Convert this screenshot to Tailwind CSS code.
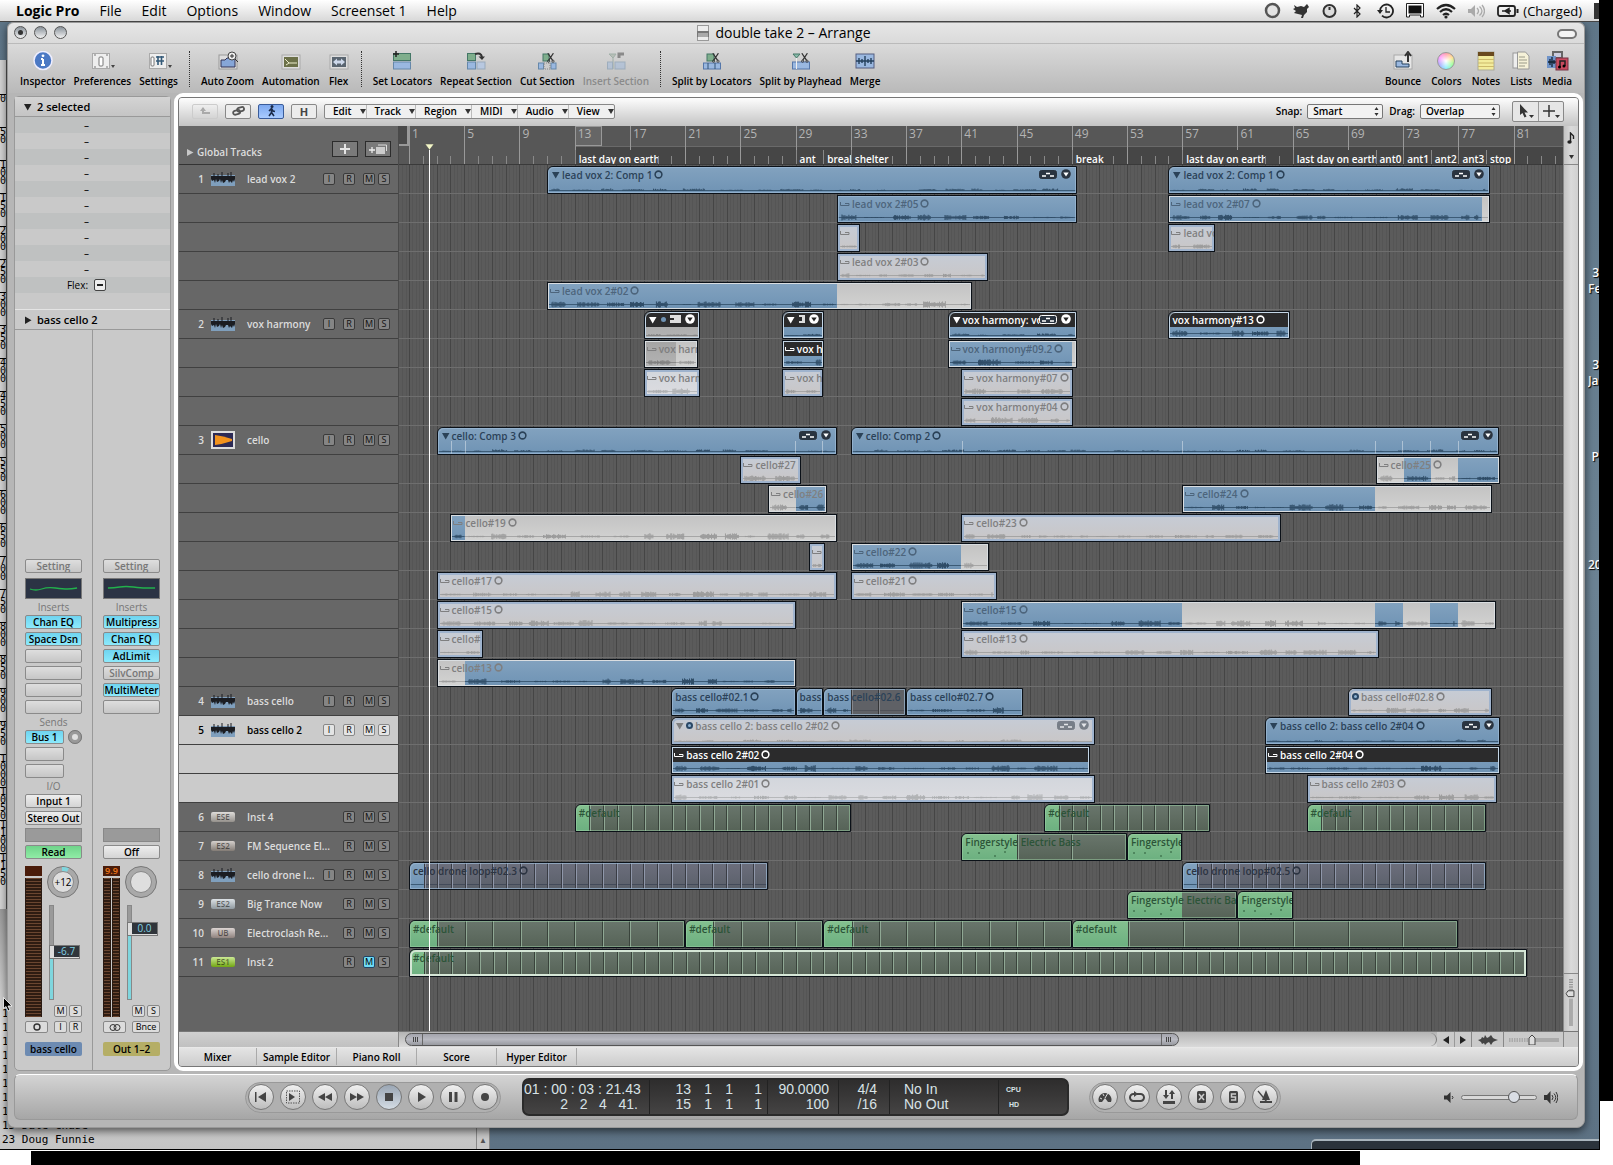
<!DOCTYPE html>
<html lang="en">
<head>
<meta charset="utf-8">
<title>double take 2 – Arrange</title>
<meta name="viewport" content="width=device-width, initial-scale=1">
<script src="https://cdn.jsdelivr.net/npm/@tailwindcss/browser@4"></script>
</head>
<body class="bg-white font-['Open_Sans','Noto_Sans',sans-serif] text-[10px] leading-[14px] text-black overflow-x-hidden">
<!-- shared symbols -->
<svg class="hidden">
  <symbol id="wave" viewBox="0 0 24 14"><rect y="3" width="24" height="11" fill="#7f9fbd"/><path d="M0 4h24v3l-1 3-1-2-1 3-2-2-1 2-1-3h-2l-1 2-2 1-1-3-1 3-1-4-1 2-2 1-1-3-1 4-1-3-2 1-1-2-1 2-2-2z" fill="#1b1d22"/><path d="M3 1v5M7 2v5M11 0v6M17 1v5M20 0v5" stroke="#1b1d22"/></symbol>
  <symbol id="ring" viewBox="0 0 8 8"><circle cx="4" cy="4" r="3" fill="none" stroke="currentColor" stroke-width="1.400"/></symbol>
  <symbol id="tri" viewBox="0 0 8 8"><path d="M0 1h7.500L3.700 7.500z" fill="currentColor"/></symbol>
  <symbol id="take" viewBox="0 0 10 6"><path d="M.5 1v3.500h3M3 4.500h6V2.500H5" fill="none" stroke="currentColor"/></symbol>
  <symbol id="badge" viewBox="0 0 18 9"><rect x=".5" y=".5" width="17" height="8" rx="2" fill="#2a3440" stroke="currentColor"/><path d="M3 6h4M7 3.500h4M11 6h4" stroke="#fff" stroke-width="1.600"/></symbol>
  <symbol id="menudot" viewBox="0 0 10 10"><circle cx="5" cy="5" r="4.800" fill="#2a3440"/><path d="M2.300 3.500h5.400L5 7.500z" fill="#fff"/></symbol>
  <symbol id="menulight" viewBox="0 0 10 10"><circle cx="5" cy="5" r="4.800" fill="#fff"/><path d="M2.300 3.500h5.400L5 7.500z" fill="#222"/></symbol>
  <symbol id="scissors" viewBox="0 0 10 12"><path d="M1 0l6 9M8 0L2 9" stroke="#333" stroke-width="1.500"/><circle cx="2" cy="10" r="1.400" fill="none" stroke="#333"/><circle cx="7.500" cy="10" r="1.400" fill="none" stroke="#333"/></symbol>
</svg>

<div class="flex min-h-screen flex-col">
<div class="flex">
<div class="min-w-0 flex-1 border-b border-black">
  <!-- menu bar -->
  <nav aria-label="Menu bar" class="flex h-[22px] items-center border-b border-[#444] bg-linear-to-b from-white to-[#d8d8d8] pl-4 text-[14px] leading-[20px]">
    <button class="font-bold">Logic Pro</button>
    <button class="ml-5">File</button><button class="ml-5">Edit</button><button class="ml-5">Options</button><button class="ml-5">Window</button><button class="ml-5">Screenset 1</button><button class="ml-5">Help</button>
    <div class="ml-auto flex items-center gap-[12px]">
      <svg width="17" height="17" viewBox="0 0 17 17"><circle cx="8.500" cy="8.500" r="6.500" fill="#e4e4e4" stroke="#555" stroke-width="2.500"/></svg>
      <svg width="17" height="16" viewBox="0 0 17 16"><path d="M1 2l3 2 4-1 3 1 3-3 2 3-2 2v3l-3 3-1 3H8l1-3-4-1-4-1 2-2-3-2 2-1z" fill="#333"/></svg>
      <svg width="15" height="16" viewBox="0 0 15 16"><circle cx="7.500" cy="8" r="6" fill="#ddd" stroke="#333" stroke-width="2"/><path d="M7.500 4v3" stroke="#333" stroke-width="2"/></svg>
      <svg class="mx-1" width="8" height="14" viewBox="0 0 8 14"><path d="M1 4l6 6-3 3V1l3 3-6 6" fill="none" stroke="#222" stroke-width="1.200"/></svg>
      <svg width="17" height="16" viewBox="0 0 17 16"><path d="M3 8a6.500 6.500 0 1 1 2 4.700" fill="none" stroke="#222" stroke-width="1.800"/><path d="M0 7h6L3 11z" fill="#222"/><path d="M9 4v5h4" fill="none" stroke="#222" stroke-width="1.300"/></svg>
      <svg width="18" height="15" viewBox="0 0 18 15"><path d="M.5 14V.5h17V14h-3v-2h-11v2z" fill="#fff" stroke="#222"/><rect x="2.500" y="2.500" width="13" height="8" fill="#111"/></svg>
      <svg width="20" height="16" viewBox="0 0 20 16"><g fill="none" stroke="#222" stroke-width="2.200"><path d="M1 6q9-8 18 0"/><path d="M4 9q6-5.500 12 0"/><path d="M7 12q3-2.500 6 0"/></g><circle cx="10" cy="14" r="1.600" fill="#222"/></svg>
      <svg width="17" height="14" viewBox="0 0 17 14"><path d="M0 5h3l4-4v12L3 9H0z" fill="#aaa"/><path d="M9 4q3 3 0 6M11.500 2.500q5 4.500 0 9M14 1q5 6 0 12" fill="none" stroke="#aaa" stroke-width="1.300"/></svg>
      <svg width="22" height="12" viewBox="0 0 22 12"><rect x="1" y="1" width="17" height="10" rx="2" fill="none" stroke="#222" stroke-width="1.800"/><path d="M19.500 4v4h2V4z" fill="#222"/><path d="M5 6h3M14 6h-2M8 6l4-2.500v5z" stroke="#222" stroke-width="1.500" fill="#222"/></svg>
      <span class="-ml-2 text-[13px]">(Charged)</span>
      <span class="h-4 w-[5px] bg-[#333]"></span>
    </div>
  </nav>

  <!-- desktop with background windows -->
  <div class="relative overflow-hidden bg-linear-to-b from-[#5f7688] via-[#6b8293] to-[#5d7284] pb-[21px]">
    <div aria-hidden="true" class="absolute inset-y-0 left-0 w-[490px]">
      <div id="edge" class="absolute left-0 top-[38px] h-[850px] w-[7px] border-r border-[#555] bg-[#d4d4d4] pt-[34px] font-['DejaVu_Sans_Mono',monospace] text-[10px] leading-[8px]"></div>
      <div class="absolute bottom-0 left-0 h-[240px] w-full bg-linear-to-b from-[#9b9b9b] via-[#e4e4e4] to-[#c4c4c4]"></div>
      <div class="absolute bottom-0 right-0 flex h-[24px] w-[14px] items-end justify-center border-x border-[#888] bg-[#c8c8c8] pb-1 text-[8px] leading-[10px] text-[#555]">▲</div>
      <div class="absolute bottom-[2px] left-[2px] whitespace-pre font-['DejaVu_Sans_Mono',monospace] text-[11px] leading-[14px]">1
1
1
1
1
1
1
1
15 Dale Chase
23 Doug Funnie</div>
    </div>
    <div aria-hidden="true" class="absolute bottom-0 right-0 h-[10px] w-[288px] rounded-tl-[5px] border-l border-t-2 border-[#aab6be] bg-[#2b333b]"></div>
    <div aria-hidden="true" class="absolute right-0 top-[243px] flex w-[11px] flex-col overflow-hidden whitespace-nowrap text-[12px] font-semibold leading-[16px] text-white [text-shadow:1px_1px_1px_#000]">
      <span class="self-end">3</span><span>Fe</span><span class="mt-[60px] self-end">3</span><span>Ja</span><span class="mt-[60px] self-end">P</span><span class="mt-[92px]">20</span>
    </div>
    <svg aria-hidden="true" class="absolute left-[3px] top-[975px] z-10" width="10" height="15" viewBox="0 0 10 15"><path d="M.5.5v11l2.500-2 2 4.500 2-1-2-4h4z" fill="#000" stroke="#fff" stroke-width=".8"/></svg>

    <!-- main window -->
    <main class="relative mr-[14px] ml-[7px] rounded-b-[8px] rounded-t-[6px] border border-[#999] bg-[#b6b6b6] pb-[7px] shadow-[0_3px_8px_rgba(0,0,0,0.6)]">
      <header class="relative flex h-[21px] items-center justify-center rounded-t-[6px] border-b border-[#bababa] bg-linear-to-b from-[#e6e6e6] to-[#dadada] pr-[24px]">
        <div class="absolute left-[6px] top-[3px] flex gap-[7px]">
          <button aria-label="Close" class="flex size-[13px] items-center justify-center rounded-full border border-[#555] bg-linear-to-b from-[#8b939b] to-[#f2f2f2]"><span class="size-[5px] rounded-full bg-[#333]"></span></button>
          <button aria-label="Minimize" class="size-[13px] rounded-full border border-[#555] bg-linear-to-b from-[#8b939b] to-[#f2f2f2]"></button>
          <button aria-label="Zoom" class="size-[13px] rounded-full border border-[#555] bg-linear-to-b from-[#8b939b] to-[#f2f2f2]"></button>
        </div>
        <svg width="12" height="16" viewBox="0 0 12 16"><rect x=".5" y=".5" width="11" height="15" fill="#ececec" stroke="#999"/><rect y="6" width="12" height="6" fill="#777"/><path d="M2 8v4M4 8v4M6 8v4M8 8v4M10 8v4" stroke="#ddd"/></svg>
        <h1 class="ml-[6px] text-[14px] leading-[20px]">double take 2 – Arrange</h1>
        <button aria-label="Toolbar" class="absolute right-[7px] top-[6px] h-[10px] w-[20px] rounded-full border-2 border-[#777] bg-[#f4f4f4]"></button>
      </header>

      <div class="flex h-[49px] items-start justify-between bg-linear-to-b from-[#dadada] to-[#b9b9b9] px-[12px] pt-[7px] font-semibold">
        <div id="tools" class="flex gap-[8px]"></div>
        <div id="tools2" class="flex gap-[10px]"></div>
      </div>

      <div class="flex">
        <!-- inspector -->
        <aside class="mt-[3px] ml-[6px] flex w-[157px] shrink-0 flex-col rounded-[5px] border border-[#999] bg-[#c9c9c9]">
          <button class="flex h-[20px] items-center gap-[5px] border-b border-[#999] bg-linear-to-b from-[#d4d4d4] to-[#c4c4c4] pl-[9px] text-[11px] font-semibold"><svg width="8" height="8" class="text-[#222]"><use href="#tri"/></svg>2 selected</button>
          <div id="params" class="flex flex-col text-center"></div>
          <button class="flex h-[21px] items-center gap-[5px] border-y border-[#999] border-t-[#e4e4e4] bg-[#c9c9c9] pl-[9px] text-[11px] font-semibold"><svg width="8" height="8" class="-rotate-90 text-[#222]"><use href="#tri"/></svg>bass cello 2</button>
          <div class="flex flex-1 font-semibold">
            <section aria-label="bass cello channel" class="flex flex-1 flex-col border-r border-[#999] px-[10px] pt-[229px]" id="strip1"></section>
            <section aria-label="Output channel" class="flex flex-1 flex-col px-[10px] pt-[229px]" id="strip2"></section>
          </div>
        </aside>

        <!-- arrange area -->
        <section class="ml-[3px] mr-[1px] min-w-0 flex-1 rounded-[9px] border-4 border-white bg-[#c9c9c9]">
          <div class="overflow-hidden rounded-[4px] border border-[#777]">
          <div class="flex h-[28px] items-center bg-linear-to-b from-[#fdfdfd] to-[#c4c4c4] pl-[13px] pr-[14px] pb-[2px] font-semibold">
            <div class="flex gap-[7px]">
              <button aria-label="Up" class="flex h-[15px] w-[26px] items-center justify-center rounded-[2px] border border-[#ccc]"><svg width="11" height="8" viewBox="0 0 11 8"><path d="M3 1v5h7" fill="none" stroke="#aaa" stroke-width="2"/><path d="M0 4l3-4 3 4z" fill="#aaa"/></svg></button>
              <button aria-label="Link" class="flex h-[15px] w-[26px] items-center justify-center rounded-[2px] border border-[#888] bg-[#ececec]"><svg width="13" height="10" viewBox="0 0 13 10" fill="none" stroke="#555" stroke-width="1.800"><rect x="5" y="1.500" width="7" height="4" rx="2" transform="rotate(-15 8 3)"/><rect x="1" y="4.500" width="7" height="4" rx="2" transform="rotate(-15 4 6)"/></svg></button>
              <button aria-label="Catch" class="flex h-[15px] w-[26px] items-center justify-center rounded-[2px] border border-[#3a5c9a] bg-linear-to-b from-[#7ea9f0] to-[#a9cbff]"><svg width="9" height="12" viewBox="0 0 9 12"><circle cx="5" cy="1.500" r="1.500" fill="#1b2b4a"/><path d="M2 6l2.500-2.500L6 6l2 .5M4.500 4v3.500L2 11M4.500 7.500L7 11" fill="none" stroke="#1b2b4a" stroke-width="1.600"/></svg></button>
              <button class="h-[15px] w-[26px] rounded-[2px] border border-[#888] bg-[#ececec] text-[11px] leading-[13px] font-bold text-[#444]">H</button>
            </div>
            <div id="menus" class="ml-[7px] flex h-[15px] rounded-[2px] border border-[#888] bg-[#f0f0f0]"></div>
            <label for="snap" class="ml-auto">Snap:</label>
            <div class="relative ml-[5px]"><select id="snap" class="h-[15px] w-[76px] appearance-none rounded-[2px] border border-[#777] bg-[#f2f2f2] pl-[5px] text-[10px] leading-[12px]"><option>Smart</option></select><svg class="pointer-events-none absolute right-[4px] top-[3px]" width="5" height="9" viewBox="0 0 5 9"><path d="M.5 3h4l-2-3zM.5 6h4l-2 3z" fill="#333"/></svg></div>
            <label for="drag" class="ml-[6px]">Drag:</label>
            <div class="relative ml-[5px]"><select id="drag" class="h-[15px] w-[80px] appearance-none rounded-[2px] border border-[#777] bg-[#f2f2f2] pl-[5px] text-[10px] leading-[12px]"><option>Overlap</option></select><svg class="pointer-events-none absolute right-[4px] top-[3px]" width="5" height="9" viewBox="0 0 5 9"><path d="M.5 3h4l-2-3zM.5 6h4l-2 3z" fill="#333"/></svg></div>
            <div class="ml-[12px] flex h-[21px] w-[52px] rounded-[2px] border border-[#888] bg-[#e6e6e6]">
              <button aria-label="Pointer tool" class="flex flex-1 items-center justify-center border-r border-[#999]"><svg width="18" height="15" viewBox="0 0 18 15"><path d="M4 0v11l2.500-2 2 4.500 2-1-2-4H12z" fill="#333"/><path d="M13 11h5l-2.500 3z" fill="#333"/></svg></button>
              <button aria-label="Marquee tool" class="flex flex-1 items-center justify-center"><svg width="18" height="15" viewBox="0 0 18 15"><path d="M7 1v12M1 7h12" stroke="#333" stroke-width="1.500"/><path d="M13 11h5l-2.500 3z" fill="#333"/></svg></button>
            </div>
          </div>

          <div class="flex">
            <!-- track headers -->
            <div class="w-[220px] shrink-0 border-r border-[#4a4a4a] bg-[#666]">
              <div class="flex h-[39px] items-end border-b border-[#333] pb-[5px] pl-[8px] text-[#ddd]">
                <button class="flex items-center gap-[3px] font-semibold"><svg width="7" height="7" viewBox="0 0 7 7"><path d="M0 0v7l6.500-3.500z" fill="#c8c8c8"/></svg>Global Tracks</button>
                <button aria-label="New track" class="mb-[2px] ml-auto flex h-[16px] w-[26px] items-center justify-center border border-[#2c2c2c] bg-[#7a7a7a]"><svg width="10" height="10" viewBox="0 0 10 10"><path d="M5 0v10M0 5h10" stroke="#e4e4e4" stroke-width="2"/></svg></button>
                <button aria-label="Duplicate track" class="mr-[7px] mb-[2px] ml-[7px] flex h-[16px] w-[26px] items-center justify-center border border-[#2c2c2c] bg-[#7a7a7a]"><svg width="18" height="11" viewBox="0 0 18 11"><path d="M0 6h6M3 3v6" stroke="#eee" stroke-width="1.300"/><path d="M9 1h8.500v6" fill="none" stroke="#ddd"/><rect x="7" y="3" width="9" height="7" fill="#ccc"/></svg></button>
              </div>
              <div id="headers" class="font-semibold text-[#dcdcdc]"></div>
              <div class="h-[54px] bg-[#646464]"></div>
            </div>
            <!-- timeline -->
            <div id="timeline" class="relative min-w-0 flex-1 overflow-hidden bg-[#5b5b5b]">
              <div id="grid" class="absolute inset-0"></div>
              <div id="ruler" class="relative h-[39px] border-b border-[#3a3a3a] bg-[#575757]"></div>
              <div id="lanes" class="relative pb-[54px] font-semibold"></div>
              <div id="playhead" class="absolute top-[18px] bottom-0 w-px bg-white"><svg class="absolute -left-[4px] top-0" width="9" height="6" viewBox="0 0 9 6"><path d="M0 0h9L4.500 6z" fill="#f4f7c8" stroke="#444" stroke-width=".5"/></svg></div>
            </div>
            <div class="flex w-[15px] shrink-0 flex-col border-l border-[#8a8a8a] bg-linear-to-r from-[#c4c4c4] via-[#dadada] to-[#d0d0d0]">
              <div class="flex h-[39px] flex-col items-center justify-around border-b border-[#888]"><svg width="8" height="12" viewBox="0 0 8 12"><path d="M3.500 10V1l3 3v3" fill="none" stroke="#222" stroke-width="1.400"/><ellipse cx="2.500" cy="10" rx="2.200" ry="1.700" fill="#222"/></svg><svg width="5" height="4" viewBox="0 0 5 4"><path d="M0 0h5L2.500 4z" fill="#333"/></svg></div>
              <div class="flex-1"></div>
              <div class="flex h-[58px] flex-col items-center border-t border-[#888] py-[5px]"><svg width="14" height="48" viewBox="0 0 14 48"><path d="M7 0v12" stroke="#999" stroke-width="4" stroke-dasharray="1.500 1"/><path d="M7 20v28" stroke="#aaa" stroke-width="4"/><path d="M2 15l2-3h6v6H4z" fill="#ddd" stroke="#444"/></svg></div>
            </div>
          </div>

          <div class="flex h-[16px] border-t border-[#777] bg-[#cacaca]">
            <div class="w-[220px] shrink-0 border-r border-[#888] bg-linear-to-b from-[#d0d0d0] to-[#c0c0c0]"></div>
            <div class="flex min-w-0 flex-1 items-center bg-linear-to-b from-[#b4b4b4] to-[#dadada] pl-[6px]">
              <div class="flex h-[13px] w-[75%] items-center justify-between rounded-full border border-[#555] bg-linear-to-b from-[#a3a4ac] via-[#b9bac2] to-[#989aa0] px-[7px]"><svg width="10" height="11" viewBox="0 0 10 11"><path d="M.5 3v5M2.500 3v5M4.500 3v5" stroke="#444"/><path d="M9.500 0v11" stroke="#666"/></svg><svg width="10" height="11" viewBox="0 0 10 11"><path d="M5.500 3v5M7.500 3v5M9.500 3v5" stroke="#444"/><path d="M.5 0v11" stroke="#666"/></svg></div>
              <div class="h-[13px] flex-1 rounded-r-full border-r border-[#777]"></div>
            </div>
            <button aria-label="Scroll left" class="flex w-[17px] items-center justify-center"><svg width="6" height="8" viewBox="0 0 6 8"><path d="M6 0v8L0 4z" fill="#222"/></svg></button>
            <button aria-label="Scroll right" class="flex w-[17px] items-center justify-center border-l border-[#999]"><svg width="6" height="8" viewBox="0 0 6 8"><path d="M0 0v8l6-4z" fill="#222"/></svg></button>
            <button aria-label="Waveform zoom" class="flex w-[32px] items-center justify-center border-l border-[#888]"><svg width="20" height="10" viewBox="0 0 20 10"><path d="M0 5l3-1 1-2 2 1 1-3 2 3 2-1 2-2 2 3 2 1 3 1-3 1-2 1-2 3-2-3-2 1-2 2-1-2-2 1-1-2z" fill="#444"/></svg></button>
            <div class="flex w-[60px] items-center justify-center border-l border-[#888]"><svg width="50" height="10" viewBox="0 0 50 10"><path d="M0 5h20" stroke="#aaa" stroke-width="4" stroke-dasharray="1.500 1"/><path d="M26 5h24" stroke="#aaa" stroke-width="4"/><path d="M20 10V3l3-3 3 3v7z" fill="#ddd" stroke="#444"/></svg></div>
            <div class="w-[15px] border-l border-[#888]"></div>
          </div>

          <div class="flex h-[19px] border-t border-[#e8e8e8] bg-linear-to-b from-[#e4e4e4] to-[#cccccc] pb-px font-semibold">
            <button class="w-[78px] border-r border-[#aaa]">Mixer</button><button class="w-[80px] border-r border-[#aaa]">Sample Editor</button><button class="w-[80px] border-r border-[#aaa]">Piano Roll</button><button class="w-[80px] border-r border-[#aaa]">Score</button><button class="w-[80px] border-r border-[#aaa]">Hyper Editor</button>
          </div>
          </div>
        </section>
      </div>

      <!-- transport -->
      <footer class="mx-[6px] mt-[3px] flex h-[46px] items-center rounded-[6px] border border-[#999] border-t-white bg-linear-to-b from-[#d4d4d4] to-[#a6a6a6]">
        <div id="transport" class="ml-[230px] flex h-[31px] items-center gap-[6px] rounded-full border border-[#999] bg-[#b0b0b0] px-[2px]"></div>
        <div class="ml-[21px] flex h-[38px] w-[547px] items-stretch rounded-[7px] border-2 border-[#2a2a2a] bg-linear-to-b from-[#2e2d2d] to-[#454444] font-['Liberation_Sans',sans-serif] text-[14px] leading-[15px] text-[#d8e2e6]">
          <div class="flex w-[126px] flex-col justify-center border-r border-[#222] pr-[11px] text-right"><span class="whitespace-nowrap">01 : 00 : 03 : 21.43</span><span class="whitespace-pre">2   2   4   41.</span></div>
          <div class="grid w-[118px] grid-cols-[41px_21px_21px_29px] content-center border-r border-[#222] text-right"><span>13</span><span>1</span><span>1</span><span>1</span><span>15</span><span>1</span><span>1</span><span>1</span></div>
          <div class="flex w-[71px] flex-col justify-center border-r border-[#222] pr-[9px] text-right"><span>90.0000</span><span>100</span></div>
          <div class="flex w-[51px] flex-col justify-center border-r border-[#222] pr-[12px] text-right"><span>4/4</span><span>/16</span></div>
          <div class="flex w-[109px] flex-col justify-center border-r border-[#222] pl-[14px]"><span>No In</span><span>No Out</span></div>
          <div class="flex flex-1 flex-col justify-center pl-[7px] text-[7px] font-bold"><span>CPU</span><span class="pl-[3px]">HD</span></div>
        </div>
        <div id="modes" class="ml-[20px] flex h-[31px] items-center gap-[6px] rounded-full border border-[#999] bg-[#b0b0b0] px-[2px]"></div>
        <div class="mr-[19px] ml-auto flex items-center gap-[7px]">
          <svg width="10" height="11" viewBox="0 0 10 11"><path d="M0 3.500h3L6.500 0v11L3 7.500H0z" fill="#333"/><path d="M8 4q2 1.500 0 3" fill="none" stroke="#333"/></svg>
          <input type="range" aria-label="Master volume" min="0" max="100" value="74" class="h-[5px] w-[76px] appearance-none rounded-full border border-[#777] bg-[#d8d8d8] [&::-webkit-slider-thumb]:size-[12px] [&::-webkit-slider-thumb]:appearance-none [&::-webkit-slider-thumb]:rounded-full [&::-webkit-slider-thumb]:border [&::-webkit-slider-thumb]:border-[#555] [&::-webkit-slider-thumb]:bg-[#d9dde4]">
          <svg width="14" height="13" viewBox="0 0 14 13"><path d="M0 4h3l3.500-4v13L3 9H0z" fill="#333"/><path d="M8 4q2 2.500 0 5M10 2.500q3.500 4 0 8M12 1q3.500 5.500 0 11" fill="none" stroke="#333"/></svg>
        </div>
      </footer>
    </main>
  </div>
</div>
<div class="flex w-[14px] shrink-0 flex-col border-l border-black"><div class="h-[1101px] bg-black"></div></div>
</div>
<div class="flex flex-1 pl-[31px] pt-px"><div class="w-[84%] bg-black"></div></div>
</div>

<script>
const $ = id => document.getElementById(id);

/* left edge ruler of the window behind */
let e = '';
for (let n = 0; n <= 1150; n += 50) e += `<div class="h-[33px] whitespace-pre border-t border-black text-center">${String(n).split('').join('\n')}</div>`;
$('edge').innerHTML = e;

/* toolbar */
const icons = {
  Inspector: '<circle cx="13" cy="9.500" r="9" fill="#4c79c4" stroke="#eef" stroke-width="1.500"/><path d="M13 8v6M11 14h4M11 8h2" stroke="#fff" stroke-width="2"/><circle cx="13" cy="4.800" r="1.400" fill="#fff"/>',
  Preferences: '<rect x="3.500" y="2.500" width="17" height="15" fill="#eee" stroke="#aaa"/><rect x="10" y="6" width="4" height="9" rx="1" fill="#fff" stroke="#777"/><path d="M5 4h2M17 4h2M5 16h2M17 16h2" stroke="#777"/><path d="M22 14h4l-2 3z" fill="#444"/>',
  Settings: '<rect x="3.500" y="2.500" width="17" height="15" fill="#eee" stroke="#aaa"/><rect x="5" y="6" width="3" height="9" rx="1" fill="#fff" stroke="#777"/><path d="M10 6h8M10 10h8M12 5v9M15.500 5v9" stroke="#345a78" stroke-width="1.600"/><path d="M22 14h4l-2 3z" fill="#444"/>',
  'Auto Zoom': '<rect x="4" y="4" width="18" height="14" fill="#ddd" stroke="#999"/><path d="M6 16V9h4l2-2h8v9z" fill="#86a6d8" stroke="#335"/><circle cx="17" cy="5" r="4" fill="#eee" stroke="#444"/><path d="M15 5h4M17 3v4M20 8l3 3" stroke="#333"/>',
  Automation: '<rect x="4" y="4" width="18" height="14" fill="#ddd" stroke="#aaa"/><rect x="6" y="6" width="14" height="10" fill="#6b7048"/><path d="M7 8l4 4h8M11 12l-3 2" fill="none" stroke="#eec"/>',
  Flex: '<rect x="4" y="4" width="18" height="14" fill="#ddd" stroke="#aaa"/><rect x="6" y="6" width="14" height="10" fill="#5a6570"/><path d="M7 11l4-3.500v2h4v-2l4 3.500-4 3.500v-2h-4v2z" fill="#cdd8ea"/>',
  'Set Locators': '<rect x="4.500" y="2.500" width="17" height="7" fill="#7fae8c" stroke="#476"/><rect x="4.500" y="11" width="17" height="7" fill="#9ab8e0" stroke="#68a"/><path d="M4 3h6M7 0v6" stroke="#222" stroke-width="1.500"/>',
  'Repeat Section': '<rect x="4.500" y="2.500" width="8" height="7" fill="#7fae8c" stroke="#476"/><rect x="4.500" y="11" width="8" height="7" fill="#9ab8e0" stroke="#68a"/><rect x="14" y="11" width="8" height="7" fill="#b8c8e0" stroke="#9ab"/><path d="M12 3q6-2 7 3" fill="none" stroke="#333" stroke-width="2"/><path d="M15.500 5.500h6.500L19 9z" fill="#333"/>',
  'Cut Section': '<rect x="9" y="3" width="6" height="7" fill="#7fae8c" stroke="#476"/><rect x="4.500" y="12" width="5" height="6" fill="#9ab8e0" stroke="#68a"/><rect x="17" y="12" width="5" height="6" fill="#9ab8e0" stroke="#68a"/><rect x="10" y="12" width="6" height="6" fill="#ccc" stroke="#888" stroke-dasharray="1"/><use href="#scissors" x="13" y="2" width="8" height="10"/>',
  'Insert Section': '<g opacity=".45"><path d="M6 3h7l-3 4zM10 7v11" fill="#9a9" stroke="#687"/><rect x="4.500" y="11" width="5" height="7" fill="#9ab8e0" stroke="#68a"/><rect x="12" y="11" width="10" height="7" fill="#9ab8e0" stroke="#68a"/><path d="M21 3h-5v4" fill="none" stroke="#333" stroke-width="3"/></g>',
  'Split by Locators': '<rect x="8" y="3" width="7" height="7" fill="#7fae8c" stroke="#476"/><rect x="4.500" y="12" width="17" height="6" fill="#9ab8e0" stroke="#57a"/><path d="M9 12v6M16 12v6" stroke="#357"/><use href="#scissors" x="13" y="2" width="8" height="10"/>',
  'Split by Playhead': '<path d="M5 3h7l-3.500 4zM8.500 7v11" fill="#8ba" stroke="#476"/><rect x="4.500" y="11" width="17" height="7" fill="#9ab8e0" stroke="#57a"/><path d="M8.500 7v11" stroke="#eee"/><use href="#scissors" x="13" y="2" width="8" height="10"/>',
  Merge: '<rect x="4" y="3" width="18" height="14" fill="#9ab8e0" stroke="#555e80"/><path d="M4 10h18M7 7v6M10 8v4M13 5v10M16 8v4M19 7v6" stroke="#24405c" stroke-width="1.400"/>',
  Bounce: '<rect x="4" y="4" width="18" height="14" fill="#e6e6e6" stroke="#aaa"/><path d="M6 16v-6h6v3h7v3z" fill="#9ab8e0" stroke="#24405c"/><path d="M18 11V3M15 5l3-4 3 4" fill="none" stroke="#333" stroke-width="2"/>',
  Notes: '<rect x="5" y="1" width="16" height="18" fill="#f3ec9c" stroke="#aa9"/><rect x="5" y="1" width="16" height="4" fill="#6a4a1e"/><path d="M5 8.500h16M5 12h16M5 15.500h16" stroke="#ccb96a"/>',
  Lists: '<rect x="5" y="2" width="9" height="15" fill="#eee" stroke="#999"/><path d="M9.500 1h8l3.500 4v13h-11.500z" fill="#f5f1d8" stroke="#999"/><path d="M11 6h6M11 9h8M11 12h8M11 15h6" stroke="#998"/>',
  Media: '<rect x="8" y="0" width="11" height="8" fill="#666"/><rect x="10" y="2" width="7" height="4" fill="#ccd"/><rect x="3" y="5" width="9" height="12" fill="#6f93c8"/><path d="M4 11h8M6 8v6M8 6v10M10 9v4" stroke="#123" stroke-width="1.300"/><rect x="12" y="7" width="12" height="12" fill="#c84a5e" stroke="#734"/><path d="M16 16v-6h5v5" fill="none" stroke="#222" stroke-width="1.500"/><circle cx="15.500" cy="16" r="1.500"/><circle cx="20" cy="15" r="1.500"/>'
};
const tool = n => n === '|' ? '<div class="mx-[3px] h-[36px] border-l border-dotted border-[#333]"></div>' :
  `<button class="flex flex-col items-center whitespace-nowrap${n === 'Insert Section' ? ' text-[#8a8a8a]' : ''}">` +
  (n === 'Colors' ? '<span class="mx-[4px] mt-px size-[18px] rounded-full border border-[#999] bg-[radial-gradient(circle,white,transparent_70%),conic-gradient(#f9a,#fd8,#9f9,#8ef,#aaf,#f9f,#f9a)]"></span><span class="mt-px h-0"></span>' :
  `<svg width="26" height="20" viewBox="0 0 26 20" class="-mx-[2px]">${icons[n]}</svg>`) + `<span class="mt-[3px]">${n}</span></button>`;
$('tools').innerHTML = ['Inspector','Preferences','Settings','|','Auto Zoom','Automation','Flex','|','Set Locators','Repeat Section','Cut Section','Insert Section','|','Split by Locators','Split by Playhead','Merge'].map(tool).join('');
$('tools2').innerHTML = ['Bounce','Colors','Notes','Lists','Media'].map(tool).join('');
$('menus').innerHTML = ['Edit','Track','Region','MIDI','Audio','View'].map((m, i) => `<button class="flex items-center gap-[8px] border-[#bbb] pl-[8px] pr-[4px]${i ? ' border-l' : ''}">${m}<svg width="6" height="5" viewBox="0 0 6 5" class="shrink-0"><path d="M0 0h6L3 5z" fill="#333"/></svg></button>`).join('');

/* inspector parameters */
let p = '';
for (let i = 0; i < 12; i++) p += `<div class="${i % 2 ? 'bg-[#c9c9c9]' : 'bg-[#bfc1c1]'} flex h-[16px] items-center justify-center pr-[12px]">${i < 10 ? '–' : i === 10 ? 'Flex:<button aria-label="Flex mode" class="ml-[6px] flex size-[12px] items-center justify-center rounded-[2px] border border-[#444] bg-[#eee]"><span class="h-[2px] w-[6px] bg-[#222]"></span></button>' : ''}</div>`;
$('params').innerHTML = p;

/* channel strips */
const slot = (t, c = 'bg-linear-to-b from-[#dedede] to-[#c6c6c6]', w = 'w-full') => `<button class="block h-[14px] ${w} overflow-hidden whitespace-nowrap rounded-[2px] border border-[#8a8a8a] ${c} text-[10px] leading-[12px]">${t}</button>`;
const cyan = 'bg-linear-to-b from-[#6fd4f0] to-[#8ceafc]';
const light = 'bg-linear-to-b from-[#eeeeee] to-[#d4d4d4]';
const eq = d => `<div class="mt-[5px] h-[21px] border border-[#777] bg-[#2b3344]"><svg class="size-full" viewBox="0 0 56 19" preserveAspectRatio="none"><path d="${d}" fill="none" stroke="#22b14c" stroke-width="1.300"/></svg></div>`;
const cap = t => `<div class="h-[16px] text-center font-normal leading-[16px] text-[#777]">${t}</div>`;
const small = t => `<button class="h-[12px] w-[13px] rounded-[2px] border border-[#888] bg-[#dcdcdc] text-[9px] leading-[10px] font-normal">${t}</button>`;
const fader = (knob, knobArc, peak, bars, top, val, b2) => `
 <div class="mt-[7px] flex h-[151px]">
  <div class="flex w-[17px] flex-col gap-[2px]"><div class="h-[10px] bg-[#4a1c0a] text-center text-[9px] leading-[10px] text-[#f07818]">${peak}</div><div class="flex flex-1 gap-px">${'<div class="flex-1 border-x border-[#2a1a12] bg-[repeating-linear-gradient(#6b4630_0_1px,#2e1c12_1px_3px)]"></div>'.repeat(bars)}</div></div>
  <div class="relative flex-1">
   <div class="ml-[5px] flex size-[32px] items-center justify-center rounded-full border border-[#777] bg-[#a9a9a9]"><div class="flex size-[22px] items-center justify-center rounded-full border border-[#888] bg-[#dedede] font-normal">${knob}</div></div>
   ${knobArc}
   <div class="absolute left-[7px] top-[39px] h-[95px] w-[5px] border border-[#888] bg-[#9a9a9a]"><div class="absolute inset-x-0 bottom-0 bg-[#7fd6de]" style="height:${100 - top}%"></div></div>
   <div class="absolute left-[7px] flex h-[14px] w-[31px] items-center border border-[#777] bg-[#ddd] pl-[4px]" style="top:${32 + top * .95}px"><div class="h-[11px] flex-1 bg-[#30353b] text-center text-[10px] leading-[11px] font-normal text-[#7fd0e4]">${val}</div></div>
   <input type="range" aria-label="Channel volume" class="absolute left-[5px] top-[39px] h-[95px] w-[32px] opacity-0 [writing-mode:vertical-lr]">
   <div class="absolute bottom-0 right-0 flex gap-[2px]">${small('M')}${small('S')}</div>
  </div>
 </div>
 <div class="mt-[4px] flex justify-between"><button class="flex h-[12px] w-[23px] items-center justify-center rounded-[2px] border border-[#888] bg-[#dcdcdc]">${b2 ? '<svg width="12" height="7" viewBox="0 0 12 7"><circle cx="4" cy="3.500" r="3" fill="none" stroke="#333"/><circle cx="8" cy="3.500" r="3" fill="none" stroke="#333"/></svg>' : '<svg width="8" height="8" class="text-[#333]"><use href="#ring"/></svg>'}</button>${b2 || `<span class="flex gap-[2px]">${small('I')}${small('R')}</span>`}</div>`;
$('strip1').innerHTML = `<div class="text-[#777]">${slot('Setting')}</div>` + eq('M4 10q6 2 12 0t14-1 12 1 10-1') + cap('Inserts') +
 `<div class="flex flex-col gap-[3px]">${slot('Chan EQ', cyan)}${slot('Space Dsn', cyan)}${slot('')}${slot('')}${slot('')}${slot('')}</div>` + cap('Sends') +
 `<div class="flex items-center justify-between">${slot('Bus 1', cyan, 'w-[39px]')}<span class="size-[14px] rounded-full border-4 border-[#999] bg-[#e0e0e0] outline outline-[#777] -outline-offset-1"></span></div><div class="mt-[3px] flex flex-col gap-[3px]">${slot('', undefined, 'w-[39px]')}${slot('', undefined, 'w-[39px]')}</div>` + cap('I/O') +
 `<div class="flex flex-col gap-[3px]">${slot('Input 1', light)}${slot('Stereo Out', light)}<div class="h-[14px] border border-[#888] bg-[#9a9a9a]"></div>${slot('Read', 'bg-linear-to-b from-[#6fd48a] to-[#90eca6]')}</div>` +
 fader('+12', '<svg class="absolute left-[5px] top-0" width="32" height="6" viewBox="0 0 32 6"><path d="M15 3q4 0 6 1" fill="none" stroke="#7fd6de" stroke-width="4"/></svg>', '', 1, 49, '-6.7', '') +
 '<div class="mt-[9px] h-[14px] rounded-[2px] bg-[#6d8bb2] text-center">bass cello</div>';
$('strip2').innerHTML = `<div class="text-[#777]">${slot('Setting')}</div>` + eq('M4 9q6 0 12-1t14 0 12 1 10 0') + cap('Inserts') +
 `<div class="flex flex-col gap-[3px]">${slot('Multipress', cyan)}${slot('Chan EQ', cyan)}${slot('AdLimit', cyan)}<div class="text-[#777]">${slot('SilvComp')}</div>${slot('MultiMeter', cyan)}${slot('')}</div>` +
 '<div class="h-[114px]"></div>' +
 `<div class="flex flex-col gap-[3px]"><div class="h-[14px] border border-[#888] bg-[#9a9a9a]"></div>${slot('Off', light)}</div>` +
 fader('', '', '9.9', 2, 25, '0.0', '<button class="h-[12px] w-[28px] rounded-[2px] border border-[#888] bg-[#dcdcdc] text-[9px] leading-[10px] font-normal">Bnce</button>') +
 '<div class="mt-[9px] h-[14px] rounded-[2px] bg-[#b5ae66] text-center">Out 1–2</div>';

/* track headers: [name, sub-lanes, icon, has input button] */
const tracks = [
 ['lead vox 2', 4, 'wave', 1], ['vox harmony', 3, 'wave', 1], ['cello', 8, 'pic', 1], ['bass cello', 0, 'wave', 1], ['bass cello 2', 2, 'wave', 1],
 ['Inst 4', 0, 'ESE', 0, '#b9b4ae'], ['FM Sequence El...', 0, 'ES2', 0, '#a39a92'], ['cello drone l...', 0, 'wave', 1], ['Big Trance Now', 0, 'ES2', 0, '#b4c0c8'],
 ['Electroclash Re...', 0, 'UB', 0, '#b3a39e'], ['Inst 2', 0, 'ES1', 0, '#8fd019']];
const tb = (t, sel, on) => `<button class="size-[12px] rounded-[2px] border text-[9px] leading-[10px] font-normal ${on ? 'border-[#246] bg-[#6fdcf5] text-black' : sel ? 'border-[#888] bg-[#e4e4e4] text-black' : 'border-[#3a3a3a] bg-[#858585] text-[#111]'}">${t}</button>`;
let h = '';
tracks.forEach(([name, sub, ic, inp, col], i) => {
  const sel = i === 4, bg = sel ? 'bg-[#cbcbcb] text-black' : 'bg-[#676767]';
  const pic = ic === 'wave' ? '<svg width="24" height="14"><use href="#wave"/></svg>' :
    ic === 'pic' ? '<svg width="24" height="18" viewBox="0 0 24 18"><rect x="1" y="1" width="22" height="16" fill="#2c2a55" stroke="#ddd" stroke-width="2"/><path d="M4 4q8 1 17 4v2q-9 3-17 4z" fill="#f2921c"/></svg>' :
    `<span class="h-[10px] w-[24px] rounded-[2px] text-center text-[8px] leading-[10px] text-black/50" style="background:linear-gradient(#fff8,#0003),${col}">${ic}</span>`;
  h += `<div class="flex h-[29px] items-center border-b border-[#404040] pr-[8px] ${bg}"><span class="w-[25px] text-right">${i + 1}</span><span class="ml-[7px] flex w-[24px]">${pic}</span><span class="ml-[12px] flex-1 whitespace-nowrap">${name}</span><span class="flex gap-[8px]">${inp ? tb('I', sel) : ''}${tb('R', sel)}<span class="flex gap-[3px]">${tb('M', sel, i === 10)}${tb('S', sel)}</span></span></div>`;
  for (let k = 0; k < sub; k++) h += `<div class="h-[29px] border-b border-[#404040] ${bg}"></div>`;
});
$('headers').innerHTML = h;

/* timeline scale: bar number -> percent of the timeline width */
const W = 1165, BAR = 13.82, ORIGIN = 10;
const pct = b => (ORIGIN + BAR * (b - 1)) / W * 100;
const span = n => BAR * n / W * 100;

let g = '';
for (let b = .5; b < 85.250; b += .25)
  g += `<div class="absolute inset-y-0 w-px ${b % 1 === 0 ? 'bg-[#454545]' : 'bg-[#555555]'}" style="left:${pct(b)}%"></div>`;
$('grid').innerHTML = g;

let r = `<div class="absolute bottom-0 right-0 top-[20px] border-t border-[#6a6a6a] bg-[#464646]" style="left:${pct(13)}%"></div><div class="absolute left-0 top-0 h-[20px] w-[10px] border-2 border-l-0 border-t-0 border-[#999] bg-[#4a4a4a]"></div>`;
r += `<div class="absolute top-0 h-[20px] border border-[#999] bg-[#666]" style="left:${pct(13)}%;width:${span(2)}%"></div>`;
for (let b = 1; b <= 84; b++) {
  const major = b % 4 === 1;
  r += `<div class="absolute bottom-0 w-px ${major ? 'top-0 bg-[#999]' : 'h-[8px] bg-[#888]'}" style="left:${pct(b)}%">${major && b < 82 ? `<span class="absolute left-[3px] top-0 text-[12px] leading-[15px] text-[#b4b4b4]">${b}</span>` : ''}</div>`;
}
[[13,'last day on earth',6],[29,'ant',2],[31,'break',2],[33,'shelter',4],[49,'break',3],[57,'last day on earth',6],[65,'last day on earth',6],[71,'ant0',2],[73,'ant1',2],[75,'ant2',2],[77,'ant3',2],[79,'stop',3]].forEach(([b, t, n]) =>
  r += `<div class="absolute bottom-0 flex h-[14px] overflow-hidden whitespace-nowrap border-l border-[#888] pl-[3px] font-semibold leading-[18px] text-white" style="left:${pct(b)}%;width:${span(n)}%"><span class="bg-[#464646]">${t}</span></div>`);
$('ruler').innerHTML = r;
$('playhead').style.left = pct(2.44) + '%';

/* waveform drawing */
let seed = 7;
const rnd = () => (seed = (seed * 16807) % 2147483647) / 2147483647;
function wave(n, kind, color, amp) {
  const w = Math.max(4, n * BAR), mid = kind === 'comp' ? 23 : 21;
  let d = '', x = 4, on = false, left = 0, a = 0;
  while (amp && x < w - 3) {
    if (left-- <= 0) { on = !on; left = on ? 6 + rnd() * 16 : 3 + rnd() * 12; a = .5 + rnd() * amp; }
    if (on) { const v = a * (.35 + rnd() * .65); d += `M${x} ${(mid + .5 - v).toFixed(1)}V${(kind === 'comp' ? mid + .5 : mid + .5 + v).toFixed(1)}`; }
    x += 1;
  }
  return `<svg class="absolute inset-0 size-full" viewBox="0 0 ${w.toFixed(1)} 26" preserveAspectRatio="none"><path d="M0 ${mid + .5}H${w.toFixed(1)}" stroke="${color}" opacity=".8"/><path d="${d}" stroke="${color}"/></svg>`;
}

const skins = {
  blue: ['bg-linear-to-b from-[#82a2bf] to-[#6f93b4]', '#2f4c66'],
  pale: ['bg-linear-to-b from-[#c6ccd6] to-[#c9c6c6]', '#9c9c9c'],
  white: ['bg-linear-to-b from-[#c3c3c3] to-[#d3d3d2]', '#9c9c9c'],
  snow: ['bg-linear-to-b from-[#d2d6dc] to-[#dcdce0]', '#aeb0b2'],
  grey: ['bg-linear-to-b from-[#a4a4a4] to-[#b4b4b4]', '#808080'],
  dimb: ['bg-linear-to-b from-[#6c6e7c] to-[#5a606a]', '#3d4656'],
  dimg: ['bg-linear-to-b from-[#69766c] to-[#566357]', ''],
  dimd: ['bg-[#5f6166]', '#4c4e55'],
  green: ['bg-linear-to-b from-[#84c08f] to-[#6cb080]', '']
};
/* [row, start, end, name, kind, segments [[skin,end]...], options] */
const B = e => [['blue', e]], P = e => [['pale', e]];
const R = [
 [0,11,49.4,'lead vox 2: Comp 1','comp',B(49.4)],[0,56,79.27,'lead vox 2: Comp 1','comp',B(79.27)],
 [1,32,49.4,'lead vox 2#05','take',B(49.4)],[1,56,79.27,'lead vox 2#07','take',[['blue',78.77],['white',79.27]]],
 [2,32,33.65,'','take',P(33.65)],[2,56,59.4,'lead vox','take',P(59.4)],
 [3,32,42.9,'lead vox 2#03','take',P(42.9)],
 [4,11,41.75,'lead vox 2#02','take',[['blue',32],['white',41.75]]],
 [5,18,22.1,'','comp',[['grey',22.1]],{dark:1,tiny:1}],[5,28,31.04,'','comp',B(31.04),{dark:1,tiny:2}],[5,40,49.35,'vox harmony: vox','comp',B(49.35),{dark:1}],[5,56,64.8,'vox harmony#13','plain',B(64.8),{dark:1}],
 [6,18,21.9,'vox harmony','take',[['grey',20.35],['white',21.9]]],[6,28,31.04,'vox harmony','take',B(31.04),{dark:1}],[6,40,49.35,'vox harmony#09.2','take',[['blue',49.05],['white',49.35]]],
 [7,18,22.1,'vox harmony','take',[['snow',22.1]]],[7,28,30.97,'vox harmony','take',P(30.97)],[7,41,49.06,'vox harmony#07','take',P(49.06)],
 [8,41,49.06,'vox harmony#04','take',P(49.06)],
 [9,3,32,'cello: Comp 3','comp',B(32)],[9,33,79.97,'cello: Comp 2','comp',B(79.97)],
 [10,25,29.4,'cello#27','take',P(29.4)],[10,71,80,'cello#25','take',[['white',73],['blue',75],['white',77],['blue',80]]],
 [11,27,31.26,'cello#26','take',[['white',29],['blue',31.26]]],[11,57,79.44,'cello#24','take',[['blue',71],['white',79.44]]],
 [12,4,32,'cello#19','take',[['blue',5],['white',32]]],[12,41,64.13,'cello#23','take',P(64.13)],
 [13,30,31.1,'','take',P(31.1)],[13,33,43,'cello#22','take',[['blue',41],['white',43]]],
 [14,3,32,'cello#17','take',P(32)],[14,33,43.56,'cello#21','take',P(43.56)],
 [15,3,29,'cello#15','take',P(29)],[15,41,79.75,'cello#15','take',[['blue',57],['white',71],['blue',73],['white',75],['blue',77],['white',79.75]]],
 [16,3,6.37,'cello#','take',P(6.37)],[16,41,71.24,'cello#13','take',P(71.24)],
 [17,3,29,'cello#13','take',[['white',5],['blue',29]]],
 [18,20,29,'bass cello#02.1','plain',B(29)],[18,29,31,'bass','plain',B(31),{noring:1}],[18,31,37,'bass cello#02.6','plain',[['blue',33],['dimd',37]],{loop:2,noring:1}],[18,37,45.46,'bass cello#02.7','plain',B(45.46)],[18,69,79.45,'bass cello#02.8','plain',P(79.45),{dot:1}],
 [19,20,50.66,'bass cello 2: bass cello 2#02','comp',P(50.66),{dot:1}],[19,63,80,'bass cello 2: bass cello 2#04','comp',B(80)],
 [20,20,50.3,'bass cello 2#02','take',B(50.3),{dark:1}],[20,63,80,'bass cello 2#04','take',B(80),{dark:1}],
 [21,20,50.66,'bass cello 2#01','take',[['snow',50.66]]],[21,66,79.8,'bass cello 2#03','take',P(79.8)],
 [22,13,33,'#default','midi',[['green',14],['dimg',33]],{loop:1}],[22,47,59,'#default','midi',[['green',48],['dimg',59]],{loop:1}],[22,66,79,'#default','midi',[['green',67],['dimg',79]],{loop:1}],
 [23,41,53,'Fingerstyle Electric Bass','midi',[['green',45],['dimg',53]],{loop:4,notes:1}],[23,53,57,'Fingerstyle','midi',[['green',57]],{notes:1}],
 [24,1,27,'cello drone loop#02.3','plain',[['blue',2],['dimb',27]],{loop:1,flat:1}],[24,57,79,'cello drone loop#02.5','plain',[['blue',58],['dimb',79]],{loop:1,flat:1}],
 [25,53,61,'Fingerstyle Electric Bass','midi',[['green',57],['dimg',61]],{notes:1}],[25,61,65,'Fingerstyle','midi',[['green',65]],{notes:1}],
 [26,1,21,'#default','midi',[['green',3],['dimg',21]],{loop:2}],[26,21,31,'#default','midi',[['green',23],['dimg',31]],{loop:2}],[26,31,49,'#default','midi',[['green',33],['dimg',49]],{loop:2}],[26,49,77,'#default','midi',[['green',53],['dimg',77]],{loop:4}],
 [27,1,82,'#default','midi',[['green',2],['dimg',82]],{loop:1,sel:1}]
];
const svg = (id, w, hh, c = '') => `<svg width="${w}" height="${hh}" class="shrink-0 ${c}"><use href="#${id}"/></svg>`;
const lanes = Array.from({ length: 28 }, () => '');
R.forEach(([row, s, end, name, kind, segs, o = {}]) => {
  const len = end - s, q = b => (b - s) / len * 100;
  let inner = '', from = s;
  segs.forEach(([sk, to]) => {
    const flat = sk.startsWith('dim') || o.flat, [bg, col] = skins[sk];
    inner += `<div class="absolute inset-y-0 ${bg}" style="left:${q(from)}%;width:${(to - from) / len * 100}%">${kind === 'midi' ? '' : wave(to - from, kind, col, flat ? 0 : kind === 'comp' ? 1.800 : 3)}</div>`;
    if (o.notes && sk === 'green') inner += `<svg class="absolute inset-0" width="50" height="26"><path d="M5 19h2M16 19h2M32 22h2M42 18h2" stroke="#2c5a38"/></svg>`;
    from = to;
  });
  if (o.loop) for (let b = s + o.loop; b < end - .01; b += o.loop) inner += `<div class="absolute inset-y-0 w-[2px] border-l border-black/60 ${row === 24 ? 'bg-[#8f97aa]' : row === 18 ? 'bg-[#85878c]' : 'bg-[#8fa894]'}" style="left:${q(b)}%"></div>`;
  if (row === 9) (s === 3 ? [4, 5, 29, 31] : [41, 57, 71, 73, 75, 77]).forEach(b => inner += `<div class="absolute bottom-0 h-[13px] w-px bg-white/40" style="left:${q(b)}%"></div>`);
  const muted = segs[0][0] === 'pale' || segs[0][0] === 'white' || segs[0][0] === 'snow' || segs[0][0] === 'grey';
  const tc = o.dark ? 'text-white' : kind === 'midi' ? 'text-[#2c5438]' : row === 24 ? 'text-[#2c3442]' : muted || row === 12 ? 'text-[#7f7f80]' : kind === 'take' ? 'text-[#4d657c]' : 'text-[#2b4258]';
  if (o.dark) inner += '<div class="absolute inset-x-0 top-0 h-[15px] bg-[#2b2b2c]"></div>';
  const pale = segs.length === 1 && (segs[0][0] === 'pale' || segs[0][0] === 'snow');
  const ib = o.sel ? 'border-2 border-[#d5e6d6]' : o.dark ? 'border border-[#c4d6e6]' : pale ? 'border-2 border-[#9fb3cd]' : segs.some(x => x[0] === 'white') ? 'border border-[#d9dde0]' : kind === 'midi' ? 'border border-[#a0d4a8]/50' : 'border border-[#9ebbd6]/70';
  const round = kind === 'take' ? '' : 'rounded-tl-[6px]';
  let lead = kind === 'comp' ? svg('tri', 8, 8) : kind === 'take' ? svg('take', 10, 6) : '';
  if (o.dot) lead += '<span class="size-[7px] shrink-0 rounded-full border-2 border-[#2b4866] bg-[#8fb2d2]"></span>';
  const ring = name && kind !== 'midi' && !o.noring && len > 6 ? svg('ring', 9, 9) : '';
  let right = '';
  if (kind === 'comp') right = `<div class="absolute ${o.tiny ? 'right-[4px] gap-[4px]' : 'right-[5px] gap-[4px]'} top-[2px] flex items-center ${o.dark ? 'bg-[#2b2b2c] text-white' : 'text-[#2a3440]'}${muted && !o.dark ? ' opacity-50' : ''}">${o.tiny === 1 ? '<svg width="11" height="8" viewBox="0 0 11 8"><path d="M0 0h11v8H0V5h4V3H0z" fill="#ddd"/></svg>' : o.tiny === 2 ? '<svg width="6" height="8" viewBox="0 0 6 8"><path d="M0 0h6v8H0V6h3V2H0z" fill="#ddd"/></svg>' : svg('badge', 18, 9)}${svg(o.dark ? 'menulight' : 'menudot', 10, 10)}</div>`;
  if (o.tiny === 1) lead += '<span class="ml-[2px] size-[5px] rounded-full bg-[#6f93b4]"></span>';
  lanes[row] += `<div class="absolute top-px h-[28px] overflow-hidden border border-[#0b1118] ${round}" style="left:${pct(s)}%;width:${span(len)}%">${inner}<div class="absolute inset-0 ${round} ${ib}"></div><div class="absolute top-0 flex h-[15px] items-center gap-[2px] whitespace-nowrap ${kind === 'plain' || kind === 'midi' ? 'left-[3px]' : kind === 'take' ? 'left-[2px]' : 'left-[4px]'} ${tc}">${lead}<span>${name}</span>${ring}</div>${right}</div>`;
});
$('lanes').innerHTML = lanes.map(l => `<div class="relative h-[29px] border-b border-[#6e6e6e]">${l}</div>`).join('');

/* transport buttons */
const rb = (label, d, on) => `<button aria-label="${label}" class="flex size-[26px] items-center justify-center rounded-full border border-[#777] ${on ? 'bg-linear-to-b from-[#9aa6b4] to-[#d4dce4]' : 'bg-linear-to-b from-[#f0f0f0] to-[#bdbdbd]'}"><svg width="16" height="14" viewBox="0 0 16 14" fill="#444">${d}</svg></button>`;
$('transport').innerHTML = rb('Go to start', '<path d="M2 2h1.500v10H2zM13 2v10L5 7z"/>') + rb('Play from selection', '<rect x="1.500" y="1" width="13" height="12" fill="none" stroke="#555" stroke-dasharray="1.500 1"/><path d="M4 3v8l6-4z"/>') + rb('Rewind', '<path d="M8 3v8L1 7zM15 3v8L8 7z"/>') + rb('Forward', '<path d="M1 3v8l7-4zM8 3v8l7-4z"/>') + rb('Stop', '<path d="M4 3h8v8H4z"/>', 1) + rb('Play', '<path d="M5 2v10l8-5z"/>') + rb('Pause', '<path d="M4 2h3v10H4zM9.500 2h3v10h-3z"/>') + rb('Record', '<circle cx="8" cy="7" r="4"/>');
$('modes').innerHTML = rb('Low latency', '<path d="M2 12a6.500 6.500 0 1 1 12 0h-3l-3-4-3 4z"/><path d="M8 8l3-5M3 8l2 1M6 4l1 2" stroke="#ddd"/>') + rb('Cycle', '<path d="M10 11H4.500a3.500 3.500 0 0 1 0-7H6M6 11h5.500a3.500 3.500 0 0 0 0-7H8" fill="none" stroke="#444" stroke-width="2"/><path d="M5 1v6l4-3z"/>') + rb('Autopunch', '<path d="M2 11h12v3H2zM4 0h2v5h2L5 9 2 5h2zM10 9V4H8l3-4 3 4h-2v5z"/>') + rb('Replace', '<rect x="4" y="1" width="9" height="12" rx="1.500"/><path d="M6 4l5 6M11 4l-5 6" stroke="#ccc" stroke-width="1.500"/>') + rb('Solo', '<rect x="4" y="1" width="9" height="12" rx="1.500"/><path d="M11 4H6.500v3h4v3H6" fill="none" stroke="#ccc" stroke-width="1.500"/>') + rb('Metronome', '<path d="M9 0l4 10H5zM3 11h12v2H3z"/><path d="M1 1l9 11" stroke="#444" stroke-width="1.300"/>');
</script>
</body>
</html>
